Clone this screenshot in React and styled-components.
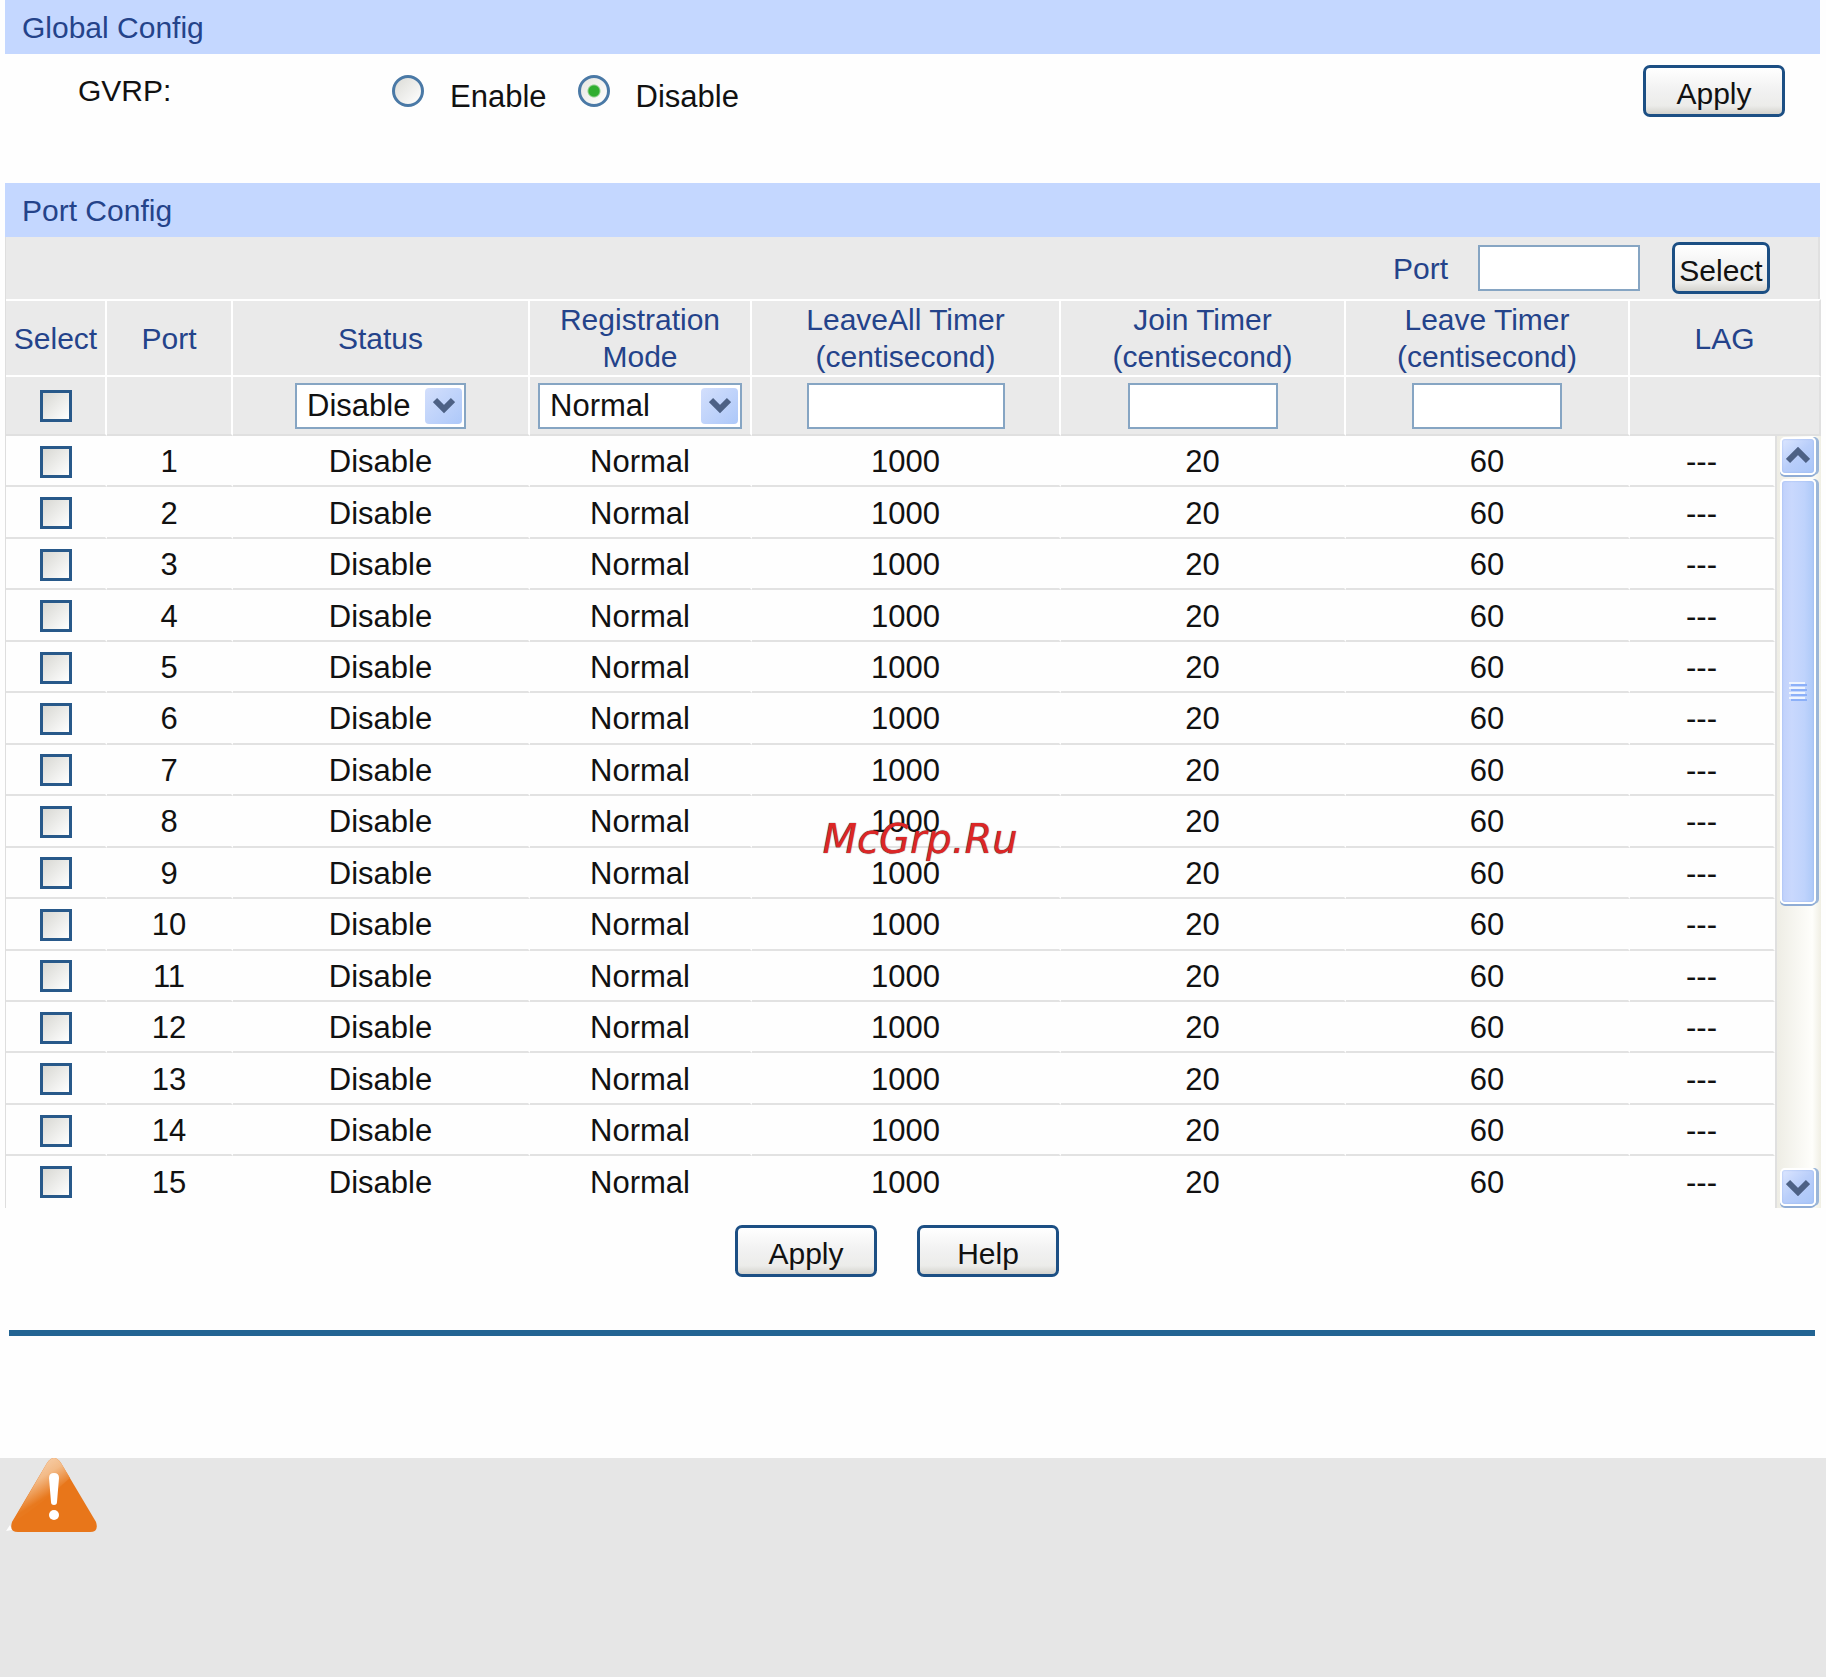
import styled, { createGlobalStyle, css } from "styled-components";

const GlobalStyle = createGlobalStyle`
  * {
    box-sizing: border-box;
  }

  body {
    margin: 0;
    background: #fefefe;
    color: #111;
    font-family: "Liberation Sans", Arial, sans-serif;
    font-size: 31px;
    line-height: 37px;
  }

  button, input, select {
    margin: 0;
    font-family: inherit;
    color: #111;
  }
`;

const Page = styled.div`
  position: relative;
  display: flex;
  flex-direction: column;
  min-height: 100vh;
`;

const Content = styled.main`
  padding: 0 6px 0 5px;
`;

const SectionTitle = styled.h2`
  margin: 0;
  padding: 9px 17px 8px;
  background: #c4d7ff;
  color: #24438a;
  font-size: 30px;
  font-weight: 400;
`;

const GlobalRow = styled.div`
  display: flex;
  align-items: flex-start;
  height: 129px;
  padding: 11px 35px 0 73px;
`;

const FieldName = styled.span`
  width: 314px;
  font-size: 30px;
  line-height: 52px;
`;

const RadioGroup = styled.div`
  display: flex;
  flex: 1;
  gap: 31px;
  padding-top: 10px;
`;

const RadioLabel = styled.label`
  display: flex;
  align-items: baseline;
  gap: 26px;
  line-height: 24px;
`;

const Radio = styled.input`
  appearance: none;
  width: 32px;
  height: 32px;
  border: 3px solid #4a79a6;
  border-radius: 50%;
  background: linear-gradient(135deg, #dcdcd7, #fff);

  &:checked {
    background:
      radial-gradient(circle, #2fae2f 0 5px, #2fae2f00 7px),
      linear-gradient(135deg, #e6e6e1, #fff);
  }
`;

const Button = styled.button`
  width: ${(props) => (props.$small ? "98px" : "142px")};
  height: 52px;
  padding: 4px 0 0;
  border: 3px solid #1c4f84;
  border-radius: 7px;
  background: linear-gradient(#fff, #f1f1f1 50%, #ececea 82%, #d4d3ce);
  font-size: 30px;
  line-height: 37px;
`;

const FilterBar = styled.div`
  display: flex;
  align-items: center;
  justify-content: flex-end;
  height: 62px;
  padding: 0 48px 0 0;
  border-left: 1px solid #dedede;
  border-right: 2px solid #e0e0e0;
  background: #eaeaea;
  color: #24438a;
  font-size: 30px;
`;

const PortLabel = styled.label`
  display: flex;
  align-items: center;
  gap: 30px;
  margin-right: 32px;
`;

const fieldBox = css`
  height: 46px;
  border: 2px solid #86a5c3;
  border-radius: 0;
  background: #fff;
  font-size: 31px;
`;

const TextBox = styled.input`
  ${fieldBox}
  display: inline-block;
  width: ${(props) => props.$width}px;
  padding: 0 8px;
  vertical-align: middle;
`;

const CheckBox = styled.input`
  appearance: none;
  display: block;
  width: 32px;
  height: 32px;
  margin: 0 auto;
  border: 3px solid #28598a;
  background: linear-gradient(135deg, #d8d8d3, #fff);
`;

const SelectWrap = styled.div`
  position: relative;
  width: ${(props) => props.$width}px;
  margin: 0 auto;
`;

const SelectBox = styled.select`
  ${fieldBox}
  appearance: none;
  display: block;
  width: 100%;
  padding: 0 40px 0 10px;
`;

const SelectArrow = styled.span`
  position: absolute;
  top: 5px;
  right: 4px;
  display: grid;
  place-items: center;
  width: 37px;
  height: 36px;
  border-radius: 4px;
  background: linear-gradient(135deg, #d3dffc, #adc8f9);
  pointer-events: none;
`;

const Table = styled.table`
  width: 100%;
  table-layout: fixed;
  border-collapse: separate;
  border-spacing: 0;
  border-left: 1px solid #dedede;
  text-align: center;
`;

const HeadCell = styled.th`
  height: ${(props) => (props.$tall ? "77px" : "59px")};
  padding: 0;
  border-top: ${(props) => (props.$tall ? "2px solid #fff" : "0")};
  border-right: 2px solid #fff;
  border-bottom: 2px solid ${(props) => (props.$tall ? "#fff" : "#e0e0e0")};
  background: #eaeaea;
  color: ${(props) => (props.$tall ? "#24438a" : "#111")};
  font-size: ${(props) => (props.$tall ? "30px" : "31px")};
  font-weight: 400;

  &:last-child {
    border-right-color: #e0e0e0;
  }
`;

const Cell = styled.td`
  height: 51px;
  padding: 2px 0 0;
  border-right: 2px solid #fefefe;
  border-bottom: 2px solid ${(props) => (props.$last ? "#fefefe" : "#e2e2e2")};
`;

const ScrollCell = styled.td`
  height: 772px;
  padding: 0;
  border-left: 2px solid #e0e0e0;
`;

const ScrollTrack = styled.div`
  display: flex;
  flex-direction: column;
  height: 772px;
  padding: 1px 0 2px 3px;
  background: linear-gradient(90deg, #eeede5, #fefefb 80%, #f0efe4);
`;

const scrollPiece = css`
  border: 2px solid #fff;
  border-radius: 5px;
  box-shadow: inset 0 0 2px #96b3ec, 0 2px 0 #8facd5, 3px 0 0 #9bb6d8;
`;

const ScrollButton = styled.button`
  ${scrollPiece}
  display: grid;
  place-items: center;
  width: 36px;
  height: 38px;
  padding: 0;
  background: linear-gradient(135deg, #dce6ff, #b9cefa 50%, #a9c6f8);
`;

const ScrollThumb = styled.div`
  ${scrollPiece}
  display: grid;
  place-items: center;
  flex: none;
  width: 36px;
  height: 425px;
  margin: 4px 0 auto;
  background: linear-gradient(90deg, #c0d1fb, #c9d8fd 30%, #bfd3fc 70%, #adc9f8);
`;

const Actions = styled.div`
  display: flex;
  justify-content: center;
  gap: 40px;
  padding: 17px 31px 53px 0;
`;

const Rule = styled.hr`
  height: 6px;
  margin: 0 5px 122px 4px;
  border: 0;
  background: #236493;
`;

const Notice = styled.aside`
  flex: 1;
  padding-left: 5px;
  background: #e6e6e6;
`;

const Watermark = styled.div`
  position: absolute;
  inset: 0;
  display: grid;
  place-items: center;
  padding: 2px 0 0 14px;
  color: #dc2626;
  font-family: "DejaVu Sans", Verdana, sans-serif;
  font-size: 40px;
  font-style: italic;
  text-shadow: 0 0 1px #222;
  pointer-events: none;
`;

const COLUMNS = [101, 126, 297, 222, 309, 285, 284, 145, 46];

const PORTS = Array.from({ length: 15 }, (_, i) => ({
  port: i + 1,
  status: "Disable",
  mode: "Normal",
  leaveAll: 1000,
  join: 20,
  leave: 60,
  lag: "---",
}));

function Chevron({ up }) {
  return (
    <svg width="24" height="18" viewBox="0 0 24 18" aria-hidden="true">
      <path
        d={up ? "M2 14L12 4L22 14" : "M2 4L12 14L22 4"}
        fill="none"
        stroke="#4d6185"
        strokeWidth="6"
      />
    </svg>
  );
}

function ArrowChevron() {
  return (
    <svg width="22" height="17" viewBox="0 0 22 17" aria-hidden="true">
      <path d="M2 3L11 12L20 3" fill="none" stroke="#4d6185" strokeWidth="6" />
    </svg>
  );
}

function Dropdown({ label, width, options }) {
  return (
    <SelectWrap $width={width}>
      <SelectBox aria-label={label}>
        {options.map((option) => (
          <option key={option}>{option}</option>
        ))}
      </SelectBox>
      <SelectArrow>
        <ArrowChevron />
      </SelectArrow>
    </SelectWrap>
  );
}

function ScrollBar() {
  return (
    <ScrollTrack>
      <ScrollButton type="button" aria-label="Scroll up">
        <Chevron up />
      </ScrollButton>
      <ScrollThumb>
        <svg width="18" height="20" viewBox="0 0 18 20" aria-hidden="true">
          <path d="M0 1H16M0 6H16M0 11H16M0 16H16" stroke="#eef4fe" strokeWidth="2" />
          <path d="M2 3H18M2 8H18M2 13H18M2 18H18" stroke="#8cb0f8" strokeWidth="2" />
        </svg>
      </ScrollThumb>
      <ScrollButton type="button" aria-label="Scroll down">
        <Chevron />
      </ScrollButton>
    </ScrollTrack>
  );
}

function WarningIcon() {
  return (
    <svg width="95" height="76" viewBox="5 0 95 76" role="img" aria-label="Caution">
      <defs>
        <linearGradient id="shine" gradientUnits="userSpaceOnUse" x1="34" y1="2" x2="54" y2="34">
          <stop offset="0" stopColor="#f8d3b0" />
          <stop offset="0.5" stopColor="#f3bb88" />
          <stop offset="1" stopColor="#e8791e" />
        </linearGradient>
      </defs>
      <path d="M6 73L10 67L12 72Z" fill="#fff" />
      <path
        d="M47 5Q54 -5 61 5L96 64Q99 74 90 74H18Q9 74 12 64Z"
        fill="#e8761a"
      />
      <path d="M47 5Q54 -5 61 5L70 20Q42 46 12 65Z" fill="url(#shine)" />
      <path d="M49 20Q49 15 54 15Q59 15 59 20L57 44Q57 47 54 47Q51 47 51 44Z" fill="#fff" />
      <circle cx="54" cy="57" r="5" fill="#fff" />
    </svg>
  );
}

export default function App() {
  return (
    <>
      <GlobalStyle />
      <Page>
        <Content>
          <SectionTitle>Global Config</SectionTitle>
          <GlobalRow>
            <FieldName id="gvrp">GVRP:</FieldName>
            <RadioGroup role="radiogroup" aria-labelledby="gvrp">
              <RadioLabel>
                <Radio type="radio" name="gvrp" value="enable" />
                Enable
              </RadioLabel>
              <RadioLabel>
                <Radio type="radio" name="gvrp" value="disable" defaultChecked />
                Disable
              </RadioLabel>
            </RadioGroup>
            <Button type="button">Apply</Button>
          </GlobalRow>

          <SectionTitle>Port Config</SectionTitle>
          <FilterBar>
            <PortLabel>
              Port
              <TextBox type="text" $width={162} />
            </PortLabel>
            <Button type="button" $small>Select</Button>
          </FilterBar>

          <Table>
            <colgroup>
              {COLUMNS.map((width, i) => (
                <col key={i} width={width} />
              ))}
            </colgroup>
            <thead>
              <tr>
                <HeadCell $tall>Select</HeadCell>
                <HeadCell $tall>Port</HeadCell>
                <HeadCell $tall>Status</HeadCell>
                <HeadCell $tall>Registration<br />Mode</HeadCell>
                <HeadCell $tall>LeaveAll Timer<br />(centisecond)</HeadCell>
                <HeadCell $tall>Join Timer<br />(centisecond)</HeadCell>
                <HeadCell $tall>Leave Timer<br />(centisecond)</HeadCell>
                <HeadCell $tall colSpan={2}>LAG</HeadCell>
              </tr>
              <tr>
                <HeadCell as="td">
                  <CheckBox type="checkbox" aria-label="Select all ports" />
                </HeadCell>
                <HeadCell as="td" />
                <HeadCell as="td">
                  <Dropdown label="Status" width={171} options={["Disable", "Enable"]} />
                </HeadCell>
                <HeadCell as="td">
                  <Dropdown
                    label="Registration Mode"
                    width={204}
                    options={["Normal", "Fixed", "Forbidden"]}
                  />
                </HeadCell>
                <HeadCell as="td">
                  <TextBox type="text" aria-label="LeaveAll Timer" $width={198} />
                </HeadCell>
                <HeadCell as="td">
                  <TextBox type="text" aria-label="Join Timer" $width={150} />
                </HeadCell>
                <HeadCell as="td">
                  <TextBox type="text" aria-label="Leave Timer" $width={150} />
                </HeadCell>
                <HeadCell as="td" colSpan={2} />
              </tr>
            </thead>
            <tbody>
              {PORTS.map((row, i) => {
                const last = i === PORTS.length - 1;
                return (
                  <tr key={row.port}>
                    <Cell $last={last}>
                      <CheckBox type="checkbox" aria-label={`Select port ${row.port}`} />
                    </Cell>
                    <Cell $last={last}>{row.port}</Cell>
                    <Cell $last={last}>{row.status}</Cell>
                    <Cell $last={last}>{row.mode}</Cell>
                    <Cell $last={last}>{row.leaveAll}</Cell>
                    <Cell $last={last}>{row.join}</Cell>
                    <Cell $last={last}>{row.leave}</Cell>
                    <Cell $last={last}>{row.lag}</Cell>
                    {i === 0 && (
                      <ScrollCell rowSpan={PORTS.length}>
                        <ScrollBar />
                      </ScrollCell>
                    )}
                  </tr>
                );
              })}
            </tbody>
          </Table>

          <Actions>
            <Button type="button">Apply</Button>
            <Button type="button">Help</Button>
          </Actions>
          <Rule />
        </Content>

        <Notice>
          <WarningIcon />
        </Notice>
        <Watermark>McGrp.Ru</Watermark>
      </Page>
    </>
  );
}
